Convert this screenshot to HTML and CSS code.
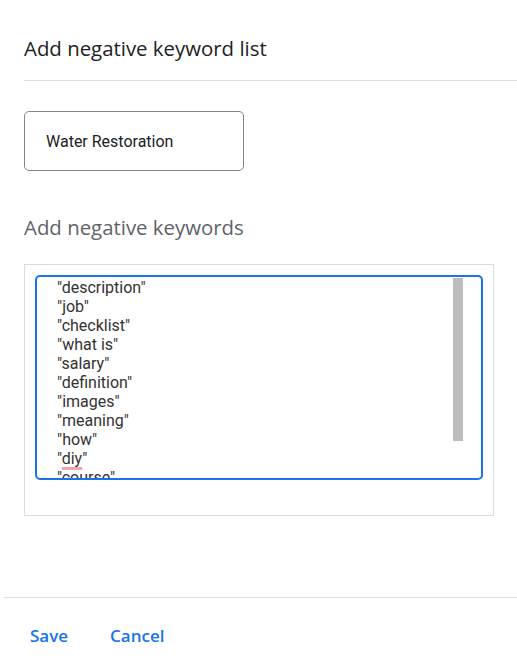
FILE: index.html
```html
<!DOCTYPE html>
<html>
<head>
<meta charset="utf-8">
<link rel="stylesheet" href="styles.css">
</head>
<body>
<div class="dialog">
  <div class="header">
    <h1 class="title">Add negative keyword list</h1>
  </div>
  <div class="body">
    <div class="name-field">Water Restoration</div>
    <h2 class="section-title">Add negative keywords</h2>
    <div class="keywords-box">
      <div class="textarea">
        <div class="lines">
          <div>"description"</div>
          <div>"job"</div>
          <div>"checklist"</div>
          <div>"what is"</div>
          <div>"salary"</div>
          <div>"definition"</div>
          <div>"images"</div>
          <div>"meaning"</div>
          <div>"how"</div>
          <div>"<span class="misspelled">diy</span>"</div>
          <div>"course"</div>
        </div>
        <div class="scroll-thumb"></div>
      </div>
    </div>
  </div>
  <div class="footer">
    <button class="btn">Save</button>
    <button class="btn">Cancel</button>
  </div>
</div>
</body>
</html>
```
FILE: styles.css
```css
* { box-sizing: border-box; }
html, body { margin: 0; padding: 0; background: #fff; }
body { font-family: Roboto, "Liberation Sans", sans-serif; color: #202124; width: 517px; height: 669px; overflow: hidden; }

.dialog { display: flex; flex-direction: column; }

.header {
  margin-left: 24px;
  padding-top: 34px;
  height: 81px;
  border-bottom: 1px solid #e0e0e0;
}
.title {
  margin: 0;
  font-family: "Open Sans", sans-serif;
  font-size: 20.4px;
  font-weight: 400;
  line-height: 28px;
  color: #202124;
}

.body { padding: 30px 0 0 24px; height: 516px; }

.name-field {
  width: 220px;
  height: 60px;
  border: 1px solid #80868b;
  border-radius: 5px;
  padding: 0 0 0 21px;
  display: flex;
  align-items: center;
  font-size: 16px;
  color: #202124;
}

.section-title {
  margin: 43px 0 0;
  font-family: "Open Sans", sans-serif;
  font-size: 20.4px;
  font-weight: 400;
  line-height: 26px;
  color: #5f6368;
}

.keywords-box {
  margin-top: 24px;
  width: 470px;
  height: 252px;
  border: 1px solid #dadce0;
  padding: 10px 10px 0 10px;
}

.textarea {
  position: relative;
  width: 448px;
  height: 205px;
  border: 2px solid #1a73e8;
  border-radius: 5px;
  overflow: hidden;
}
.lines {
  padding: 1px 0 0 20px;
  font-size: 16px;
  line-height: 19px;
  color: #333;
}
.misspelled {
  text-decoration: underline;
  text-decoration-color: #f4a3b0;
  text-decoration-thickness: 3px;
  text-underline-offset: 3px;
}
.scroll-thumb {
  position: absolute;
  top: 1px;
  right: 18px;
  width: 10px;
  height: 163px;
  background: #bdbdbd;
}

.footer {
  margin-left: 4px;
  border-top: 1px solid #dadce0;
  display: flex;
  gap: 42px;
  padding: 26px 0 0 26px;
}
.btn {
  border: 0;
  background: none;
  padding: 0;
  font-family: "Open Sans", sans-serif;
  font-weight: 600;
  font-size: 17px;
  line-height: 24px;
  color: #1a73e8;
  cursor: pointer;
}
```
